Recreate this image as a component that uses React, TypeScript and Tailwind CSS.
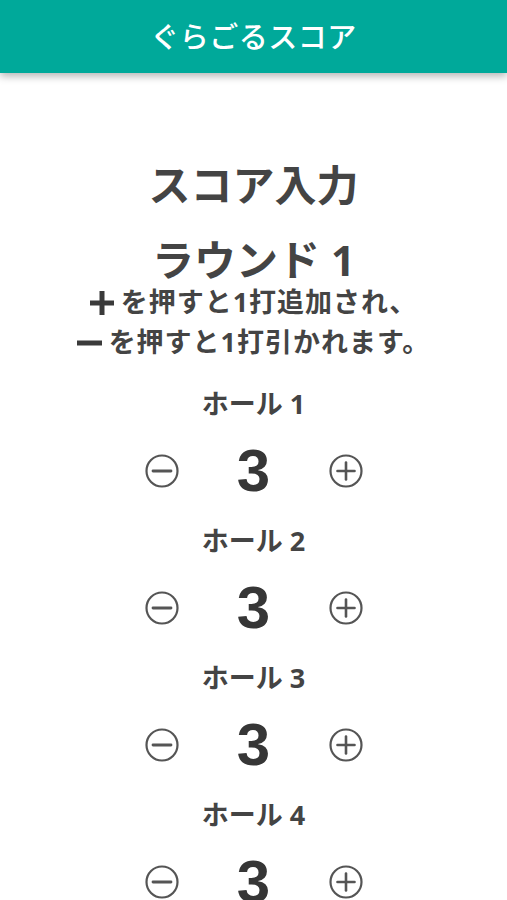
import React from "react";

const jp = { fontFamily: '"Noto Sans", "Noto Sans CJK JP", sans-serif' };

function MinusIcon() {
  return (
    <svg width="34" height="34" viewBox="0 0 34 34" fill="none">
      <circle cx="17" cy="17" r="15.5" stroke="#555" strokeWidth="2.2" />
      <line x1="8" y1="17" x2="26" y2="17" stroke="#555" strokeWidth="2.8" strokeLinecap="round" />
    </svg>
  );
}

function PlusIcon() {
  return (
    <svg width="34" height="34" viewBox="0 0 34 34" fill="none">
      <circle cx="17" cy="17" r="15.5" stroke="#555" strokeWidth="2.2" />
      <line x1="8.5" y1="17" x2="25.5" y2="17" stroke="#555" strokeWidth="2.6" strokeLinecap="round" />
      <line x1="17" y1="8.5" x2="17" y2="25.5" stroke="#555" strokeWidth="2.6" strokeLinecap="round" />
    </svg>
  );
}

function BoldPlus() {
  return (
    <svg width="24" height="24" viewBox="0 0 24 24" className="mr-[7px] inline-block align-[-3px]">
      <rect x="0" y="9.5" width="24" height="5" fill="#3a3a3a" />
      <rect x="9.5" y="0" width="5" height="24" fill="#3a3a3a" />
    </svg>
  );
}

function BoldMinus() {
  return (
    <svg width="25" height="24" viewBox="0 0 25 24" className="mr-[7px] inline-block align-[-3px]">
      <rect x="0" y="9.5" width="25" height="5" fill="#3a3a3a" />
    </svg>
  );
}

function Hole({ n }: { n: number }) {
  return (
    <div className="flex flex-col items-center">
      <div className="text-[27px] leading-[36px] font-bold text-[#444]" style={jp}>
        ホール {n}
      </div>
      <div className="mt-[18px] flex h-[62px] items-center justify-center gap-[46px]">
        <button className="flex h-[34px] w-[34px] items-center justify-center">
          <MinusIcon />
        </button>
        <div
          className="w-[58px] text-center text-[60px] font-bold leading-[62px] text-[#363636]"
          style={{ fontFamily: '"Liberation Sans", Arial, sans-serif' }}
        >
          3
        </div>
        <button className="flex h-[34px] w-[34px] items-center justify-center">
          <PlusIcon />
        </button>
      </div>
      <div className="h-[21px]" />
    </div>
  );
}

export default function App() {
  return (
    <div className="h-[900px] w-full overflow-hidden bg-white" style={jp}>
      <header className="relative z-10 flex h-[73px] items-center justify-center bg-[#00a99a] shadow-[0_3px_8px_rgba(0,0,0,0.3)]">
        <h1 className="text-[29px] font-medium tracking-[0.5px] text-white" style={jp}>
          ぐらごるスコア
        </h1>
      </header>
      <main className="flex flex-col items-center pt-[87px] text-[#444]">
        <h2 className="text-[42px] font-bold leading-[50px]">スコア入力</h2>
        <h3 className="mt-[30px] text-[42px] font-bold leading-[40px]">ラウンド 1</h3>
        <div className="mt-[2px] text-center text-[27px] font-bold leading-[40px] tracking-[1px]">
          <p>
            <BoldPlus />を押すと1打追加され、
          </p>
          <p>
            <BoldMinus />を押すと1打引かれます。
          </p>
        </div>
        <div className="mt-[24px] flex flex-col items-center">
          <Hole n={1} />
          <Hole n={2} />
          <Hole n={3} />
          <Hole n={4} />
        </div>
      </main>
    </div>
  );
}
